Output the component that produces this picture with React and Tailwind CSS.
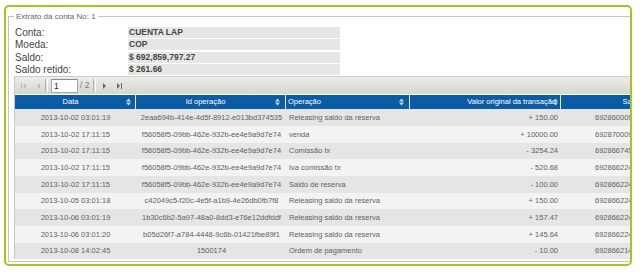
import React from "react";

const info = [
  { label: "Conta:", value: "CUENTA LAP" },
  { label: "Moeda:", value: "COP" },
  { label: "Saldo:", value: "$ 692,859,797.27" },
  { label: "Saldo retido:", value: "$ 261.66" },
];

const rows = [
  ["2013-10-02 03:01:19", "2eaa694b-414e-4d5f-8912-e013bd374535", "Releasing saldo da reserva", "+ 150.00", "692860009.26"],
  ["2013-10-02 17:11:15", "f56058f5-09bb-462e-932b-ee4e9a9d7e74", "venda", "+ 10000.00", "692870009.26"],
  ["2013-10-02 17:11:15", "f56058f5-09bb-462e-932b-ee4e9a9d7e74", "Comissão tx", "- 3254.24", "692866745.02"],
  ["2013-10-02 17:11:15", "f56058f5-09bb-462e-932b-ee4e9a9d7e74", "Iva comissão tx", "- 520.68", "692866224.34"],
  ["2013-10-02 17:11:15", "f56058f5-09bb-462e-932b-ee4e9a9d7e74", "Saldo de reserva", "- 100.00", "692866224.34"],
  ["2013-10-05 03:01:18", "c42049c5-f20c-4e5f-a1b9-4e26db0fb7f8", "Releasing saldo da reserva", "+ 150.00", "692866224.34"],
  ["2013-10-06 03:01:19", "1b30c6b2-5a97-48a0-8dd3-e76e12ddfddf", "Releasing saldo da reserva", "+ 157.47", "692866224.34"],
  ["2013-10-06 03:01:20", "b05d26f7-a784-4448-9c6b-01421fbe89f1", "Releasing saldo da reserva", "+ 145.64", "692866224.34"],
  ["2013-10-08 14:02:45", "1500174", "Ordem de pagamento", "- 10.00", "692866214.34"],
];

const SortIcon = () => (
  <svg width="5" height="8" viewBox="0 0 5 8" className="shrink-0">
    <polygon points="0,3.4 2.5,0.6 5,3.4" fill="#c9d7e8" />
    <polygon points="0,4.6 2.5,7.4 5,4.6" fill="#c9d7e8" />
  </svg>
);

const Sep = () => (
  <div className="mx-[4px] h-[13px] w-[2px] border-l border-[#b4b4ae] bg-white/0 shadow-[1px_0_0_#fafaf8]" />
);

const App = () => {
  return (
    <div className="w-[640px] h-[276px] bg-white overflow-hidden font-['Liberation_Sans',Arial,sans-serif]">
      <div className="ml-[4px] mt-[5px] w-[628px] h-[261px] border-2 border-[#a0c81e] rounded-[5px] overflow-hidden pl-[2px] pt-[5px]">
        <fieldset className="border border-[#c4c4c4] w-[700px] h-[250px] pl-[5px]">
          <legend className="px-[2px] text-[8px] leading-[9px] text-[#666]">
            Extrato da conta No: 1
          </legend>

          <div className="mt-[6px] grid grid-cols-[113px_212px] gap-x-[1px] gap-y-[1.4px]">
            {info.map((i) => (
              <React.Fragment key={i.label}>
                <div className="h-[11px] pl-[1px] text-[10px] leading-[11px] text-[#444]">{i.label}</div>
                <div className="h-[11px] bg-[#e6e6e6] pl-[1px] text-[8.5px] leading-[11px] font-bold text-[#444]">
                  {i.value}
                </div>
              </React.Fragment>
            ))}
          </div>

          <div className="mt-[1px] border-l border-[#c8c8c8] w-[700px]">
            {/* pager */}
            <div className="h-[18px] flex items-center pl-[5px] border-t border-[#cfcfca] bg-linear-to-b from-[#ecece8] to-[#d7d7d1]">
              <svg width="6" height="6" viewBox="0 0 6 6" className="ml-[1px]">
                <rect x="0" y="0" width="1" height="6" fill="#bcbcb8" />
                <polygon points="5,0 2,3 5,6" fill="#bcbcb8" />
              </svg>
              <svg width="5" height="6" viewBox="0 0 5 6" className="ml-[9px]">
                <polygon points="4,0 1,3 4,6" fill="#bcbcb8" />
              </svg>
              <Sep />
              <div className="h-[14px] w-[27px] bg-white border border-[#a8a8a8] border-t-[#8c8c8c] text-[8.5px] leading-[12px] pl-[2px] text-[#222]">
                1
              </div>
              <span className="ml-[2px] text-[8.5px] text-[#777]">/ 2</span>
              <Sep />
              <svg width="5" height="6" viewBox="0 0 5 6" className="ml-[3px]">
                <polygon points="1,0 4,3 1,6" fill="#666" />
              </svg>
              <svg width="6" height="6" viewBox="0 0 6 6" className="ml-[9px]">
                <polygon points="1,0 4,3 1,6" fill="#666" />
                <rect x="5" y="0" width="1" height="6" fill="#666" />
              </svg>
            </div>

            {/* header */}
            <div className="mt-[1px] h-[14px] flex bg-[#0b5ba5] text-white text-[7.5px] leading-[14px]">
              <div className="w-[121px] border-r border-[#dfe8f2] flex items-center pr-[4px]">
                <span className="flex-1 text-center">Data</span>
                <SortIcon />
              </div>
              <div className="w-[150px] border-r border-[#dfe8f2] flex items-center pr-[5px]">
                <span className="flex-1 text-center">Id operação</span>
                <SortIcon />
              </div>
              <div className="w-[124px] border-r border-[#dfe8f2] flex items-center pl-[2px] pr-[5px]">
                <span className="flex-1">Operação</span>
                <SortIcon />
              </div>
              <div className="relative w-[151px] border-r border-[#dfe8f2] pr-[4px] text-right">
                <span>Valor original da transação</span>
                <span className="absolute right-[2px] top-[3px]">
                  <SortIcon />
                </span>
              </div>
              <div className="w-[142px] text-center">Saldo</div>
            </div>

            {/* rows */}
            {rows.map((r, idx) => (
              <div
                key={idx}
                className={`h-[16.7px] flex items-center text-[7.5px] text-[#5f5f5f] ${idx % 2 === 0 ? "bg-[#e5e5e5]" : "bg-[#f3f3f3]"}`}
              >
                <div className="w-[121px] text-center">{r[0]}</div>
                <div className="w-[150px] text-center pl-[1px]">{r[1]}</div>
                <div className="w-[124px] pl-[3px]">{r[2]}</div>
                <div className="w-[151px] text-right pr-[3px]">{r[3]}</div>
                <div className="w-[142px] pl-[34px]">{r[4]}</div>
              </div>
            ))}
          </div>
        </fieldset>
      </div>
    </div>
  );
};

export default App;
